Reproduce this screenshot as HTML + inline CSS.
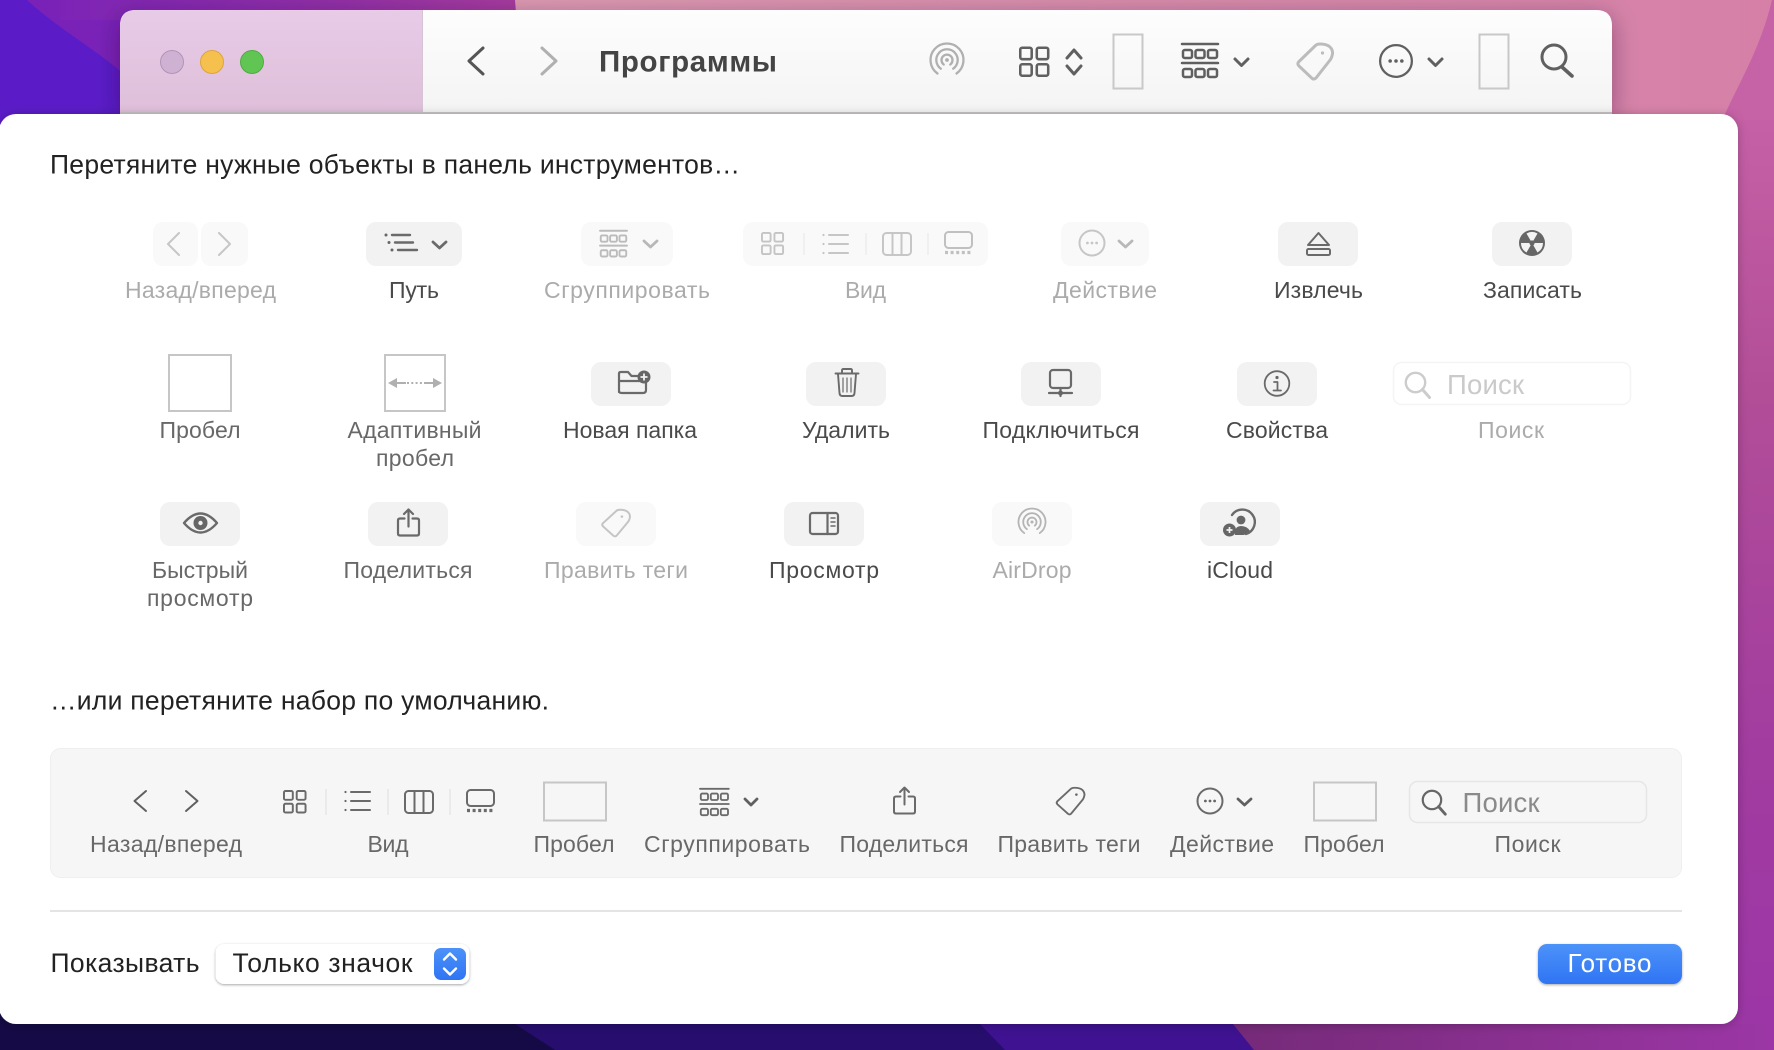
<!DOCTYPE html>
<html lang="ru"><head><meta charset="utf-8"><title>Панель инструментов</title>
<style>
html,body{margin:0;padding:0;background:#fff;width:1774px;height:1050px;overflow:hidden}
svg{display:block}
text{font-family:"Liberation Sans","DejaVu Sans",sans-serif;font-size:23px;text-anchor:middle}
.d{fill:#4a4a4a}.g{fill:#ababab}.m{fill:#686868}
.h{fill:#222;font-size:26.5px;text-anchor:start}
.s{fill:none;stroke:#6a6a6a;stroke-width:2;stroke-linecap:round;stroke-linejoin:round}
.f{fill:none;stroke:#c6c6c6;stroke-width:2;stroke-linecap:round;stroke-linejoin:round}
.t{fill:none;stroke:#606060;stroke-width:3;stroke-linecap:round;stroke-linejoin:round}
.n{fill:none;stroke:#6a6a6a;stroke-width:1.8;stroke-linecap:round;stroke-linejoin:round}
</style></head><body>
<svg xmlns="http://www.w3.org/2000/svg" width="1774" height="1050" viewBox="0 0 1774 1050">
<defs>
<linearGradient id="wr" x1="0" y1="0" x2="0" y2="1"><stop offset="0" stop-color="#c660a6"/><stop offset=".3" stop-color="#b24e98"/><stop offset=".7" stop-color="#a23ca0"/><stop offset="1" stop-color="#9c36a6"/></linearGradient>
<linearGradient id="side" x1="0" y1="0" x2="0" y2="1"><stop offset="0" stop-color="#e7cbe7"/><stop offset="1" stop-color="#dfbfda"/></linearGradient>
<linearGradient id="tb" x1="0" y1="0" x2="0" y2="1"><stop offset="0" stop-color="#fdfdfd"/><stop offset="1" stop-color="#f4f4f4"/></linearGradient>
<linearGradient id="btn" x1="0" y1="0" x2="0" y2="1"><stop offset="0" stop-color="#4c92f9"/><stop offset="1" stop-color="#2f74f3"/></linearGradient>
<linearGradient id="bot" x1="0" y1="0" x2="1" y2="0"><stop offset="0" stop-color="#752a78"/><stop offset="1" stop-color="#9c36a6"/></linearGradient>
<linearGradient id="top" x1="0" y1="0" x2="1" y2="0"><stop offset="0" stop-color="#7d24b6"/><stop offset=".6" stop-color="#9330a8"/><stop offset="1" stop-color="#a83c9e"/></linearGradient>
<linearGradient id="topp" x1="0" y1="0" x2="1" y2="0"><stop offset="0" stop-color="#de9ab2"/><stop offset=".5" stop-color="#d88cac"/><stop offset="1" stop-color="#d680a8"/></linearGradient>
<filter id="ss" x="-5%" y="-5%" width="110%" height="110%"><feDropShadow dx="0" dy="1" stdDeviation="5" flood-color="#000" flood-opacity=".25"/></filter>
<filter id="ws" x="-5%" y="-30%" width="110%" height="180%"><feDropShadow dx="0" dy="6" stdDeviation="12" flood-color="#200030" flood-opacity=".4"/></filter>
<filter id="sel" x="-10%" y="-20%" width="120%" height="150%"><feDropShadow dx="0" dy="1" stdDeviation="1.2" flood-color="#000" flood-opacity=".35"/></filter>

<g id="tag"><path d="M18.5 2.5Q20 1 23 1Q30 1 33 4Q36 7 35.500 11Q35 14 33.500 16.500L19 35Q17 37 15 35.300L2 23Q0 21 1.500 19Z"/><circle cx="25.500" cy="10" r="1.600" stroke="none" fill="currentColor"/></g>
<g id="air"><path d="M-9.500 13.500A16.500 16.500 0 1 1 9.500 13.500"/><path d="M-6.200 8.700A10.700 10.700 0 1 1 6.200 8.700"/><path d="M-3.300 4.500A5.500 5.500 0 1 1 3.300 4.500"/><circle r="1.900" fill="currentColor" stroke="none"/></g>
<g id="grp"><path d="M0 1H36M0 20H36"/><rect x="1" y="7" width="9" height="8" rx="1.800"/><rect x="13.500" y="7" width="9" height="8" rx="1.800"/><rect x="26" y="7" width="9" height="8" rx="1.800"/><rect x="1" y="26" width="9" height="8" rx="1.800"/><rect x="13.500" y="26" width="9" height="8" rx="1.800"/><rect x="26" y="26" width="9" height="8" rx="1.800"/></g>
<g id="grid"><rect x="1" y="1" width="9" height="9" rx="1.500"/><rect x="14" y="1" width="9" height="9" rx="1.500"/><rect x="1" y="14" width="9" height="9" rx="1.500"/><rect x="14" y="14" width="9" height="9" rx="1.500"/></g>
<g id="lst"><path d="M7 2H26M7 11H26M7 20H26"/><circle cx="1.500" cy="2" r="1.100" fill="currentColor" stroke="none"/><circle cx="1.500" cy="11" r="1.100" fill="currentColor" stroke="none"/><circle cx="1.500" cy="20" r="1.100" fill="currentColor" stroke="none"/></g>
<g id="col"><rect x="1" y="1" width="28" height="22" rx="3.500"/><path d="M10.500 1V23M19.500 1V23"/></g>
<g id="gal"><rect x="1" y="1" width="27" height="16" rx="3.500"/><path d="M1 21.500H28" stroke-dasharray="3 2.600" stroke-width="3.200" stroke-linecap="butt"/></g>
<g id="act"><circle r="12.500"/><circle cx="-4.600" r="1.400" fill="currentColor" stroke="none"/><circle r="1.400" fill="currentColor" stroke="none"/><circle cx="4.600" r="1.400" fill="currentColor" stroke="none"/></g>
<g id="lens"><circle cx="10.500" cy="10.500" r="9.700"/><path d="M17.500 17.500L24.500 25.500" stroke-width="3"/></g>
<g id="share"><path d="M7.500 10H3Q1 10 1 12V25Q1 27 3 27H20Q22 27 22 25V12Q22 10 20 10H15.500"/><path d="M11.500 18V1M7 5.500L11.500 1L16 5.500"/></g>
</defs>

<!-- wallpaper -->
<rect width="1774" height="1050" fill="#5b1cc8"/>
<path d="M27 0C60 30 90 45 125 75V0Z" fill="#7a22b8"/>
<path d="M60 0H515L526 20H60Z" fill="url(#top)"/>
<path d="M515 0H1774V140H526Z" fill="url(#topp)"/>
<path d="M1772 0C1760 50 1740 80 1720 125H1774V0Z" fill="#c662a6"/>
<rect x="0" y="1000" width="1690" height="50" fill="#150a45"/>
<path d="M515 1024H1000L1010 1050H555Z" fill="#260d6e"/>
<path d="M980 1024H1235L1255 1050H1005Z" fill="#3e1290"/>
<path d="M1233 1024H1774V1050H1254Z" fill="url(#bot)"/>
<rect x="1690" y="120" width="84" height="904" fill="url(#wr)"/>

<!-- finder window -->
<path d="M136 10H1596Q1612 10 1612 26V114H120V26Q120 10 136 10Z" fill="url(#tb)" filter="url(#ws)"/>
<path d="M136 10H422V114H120V26Q120 10 136 10Z" fill="url(#side)"/>
<rect x="422" y="10" width="1" height="104" fill="#d6c4d4"/>
<rect x="120" y="112" width="1492" height="2" fill="#c8c4c8"/>
<circle cx="172" cy="62" r="11.500" fill="#cfb1d3" stroke="#b293b8"/>
<circle cx="212" cy="62" r="11.500" fill="#f6c04f" stroke="#dca53b"/>
<circle cx="252" cy="62" r="11.500" fill="#61c554" stroke="#4fab42"/>
<path d="M483 48L469 61L483 74" fill="none" stroke="#555" stroke-width="3" stroke-linecap="round" stroke-linejoin="round"/>
<path d="M542 48L556 61L542 74" fill="none" stroke="#b0b0b0" stroke-width="3" stroke-linecap="round" stroke-linejoin="round"/>
<text x="599" y="71.500" style="text-anchor:start;font-size:29.500px;font-weight:bold;fill:#444" textLength="178">Программы</text>
<use href="#air" x="947" y="60" class="f" style="stroke:#b0b0b0;color:#b0b0b0;stroke-width:2.300"/>
<use href="#grid" transform="translate(1019 46.500) scale(1.270)" class="t" style="stroke-width:2"/>
<path d="M1067 58L1074 50L1081 58M1067 66L1074 74L1081 66" class="t"/>
<rect x="1113.500" y="34.500" width="29" height="54" fill="none" stroke="#c8c8c8" stroke-width="2"/>
<use href="#grp" x="1182" y="43" class="t" style="color:#606060;stroke-width:2.500"/>
<path d="M1235 59L1241.500 65.500L1248 59" class="t"/>
<use href="#tag" x="1297" y="43" class="f" style="stroke:#bcbcbc;color:#bcbcbc;stroke-width:3"/>
<use href="#act" transform="translate(1396 61) scale(1.270)" class="n" style="color:#606060;stroke:#606060"/>
<path d="M1429 59L1435.500 65.500L1442 59" class="t"/>
<rect x="1479.500" y="34.500" width="29" height="54" fill="none" stroke="#c8c8c8" stroke-width="2"/>
<circle cx="1554" cy="57" r="12" class="t"/><path d="M1562 67L1572 76" class="t" style="stroke-width:3.600"/>

<!-- sheet -->
<rect x="-1" y="114" width="1739" height="910" rx="17" fill="#fff" filter="url(#ss)"/>
<text class="h" x="50" y="173.500" textLength="690">Перетяните нужные объекты в панель инструментов…</text>

<!-- row 1 -->
<g fill="#f9f9f9">
<rect x="153" y="222" width="45" height="44" rx="10"/><rect x="201" y="222" width="47" height="44" rx="10"/>
<rect x="581" y="222" width="92" height="44" rx="10"/><rect x="743" y="222" width="245" height="44" rx="10"/>
<rect x="1061" y="222" width="88" height="44" rx="10"/>
</g>
<g fill="#f2f2f2">
<rect x="366" y="222" width="96" height="44" rx="10"/><rect x="1278" y="222" width="80" height="44" rx="10"/><rect x="1492" y="222" width="80" height="44" rx="10"/>
</g>
<path d="M179 233L168 244L179 255" class="f"/><path d="M219 233L230 244L219 255" class="f"/>
<g class="s" style="stroke-width:2.400"><path d="M392 235H410M395 242.500H413M398 250H417"/><path d="M433 242L439.500 248L446 242" style="stroke-width:2.800"/></g>
<circle cx="386" cy="235" r="1.500" fill="#666"/><circle cx="389" cy="242.500" r="1.500" fill="#666"/><circle cx="392" cy="250" r="1.500" fill="#666"/>
<use href="#grp" transform="translate(600 230) scale(.75 .78)" class="f" style="stroke:#bbb;stroke-width:2.500"/>
<path d="M644 241L650.500 247L657 241" class="f" style="stroke:#b8b8b8;stroke-width:2.800"/>
<use href="#grid" transform="translate(761 232) scale(.96)" class="f" style="stroke:#c4c4c4"/>
<path d="M804 233V255M866 233V255M928 233V255" stroke="#eee" stroke-width="1.500"/>
<use href="#lst" x="822" y="233" class="f" style="color:#c4c4c4"/>
<use href="#col" x="882" y="232" class="f"/>
<use href="#gal" x="944" y="231" class="f" style="stroke:#c0c0c0"/>
<use href="#act" x="1092" y="243" class="f" style="color:#c6c6c6"/>
<path d="M1119 241L1125.500 247L1132 241" class="f" style="stroke:#b8b8b8;stroke-width:2.800"/>
<path d="M1318.500 233L1329 245H1308Z" class="n" style="stroke-width:2"/><rect x="1307" y="249" width="23" height="6" rx="1.500" class="n" style="stroke-width:2"/>
<circle cx="1532" cy="243" r="13" fill="#666"/>
<path d="M1532 243L1526.500 233.500A11 11 0 0 1 1537.500 233.500ZM1532 243H1543A11 11 0 0 1 1537.500 252.500ZM1532 243L1526.500 252.500A11 11 0 0 1 1521 243Z" fill="#f2f2f2"/>
<circle cx="1532" cy="243" r="2.600" fill="#666"/>
<text class="g" x="200.500" y="298" textLength="151">Назад/вперед</text>
<text class="d" x="414" y="298" textLength="50">Путь</text>
<text class="g" x="627" y="298" textLength="166">Сгруппировать</text>
<text class="g" x="865.500" y="298" textLength="41">Вид</text>
<text class="g" x="1105" y="298" textLength="104">Действие</text>
<text class="d" x="1318.500" y="298" textLength="89">Извлечь</text>
<text class="d" x="1532.500" y="298" textLength="99">Записать</text>

<!-- row 2 -->
<rect x="169" y="355" width="62" height="56" fill="#fff" stroke="#c6c6c6" stroke-width="2"/>
<rect x="385" y="355" width="60" height="56" fill="#fff" stroke="#c6c6c6" stroke-width="2"/>
<path d="M397 378V388L388 383ZM433 378V388L442 383Z" fill="#b0b0b0"/><path d="M397 383H406M433 383H424" stroke="#b0b0b0" stroke-width="2"/><path d="M407 383H424" stroke="#b0b0b0" stroke-width="2" stroke-dasharray="2 2.300"/>
<g fill="#f2f2f2">
<rect x="591" y="362" width="80" height="44" rx="10"/><rect x="806" y="362" width="80" height="44" rx="10"/><rect x="1021" y="362" width="80" height="44" rx="10"/><rect x="1237" y="362" width="80" height="44" rx="10"/>
</g>
<path d="M619 392V373.500Q619 372 621 372H628L631.500 376H640M619 381H640M646 383V390Q646 393 643 393H622Q619 393 619 391" class="n" style="stroke-width:2.200"/>
<circle cx="644" cy="377" r="6.500" fill="#666"/><path d="M640.500 377H647.500M644 373.500V380.500" stroke="#f2f2f2" stroke-width="1.800"/>
<g class="n" style="stroke-width:1.900"><path d="M835.500 373.500H858.500M842 373V370.500Q842 369 843.500 369H850.500Q852 369 852 370.500V373"/><path d="M838 374L839.500 393Q839.700 396 842.500 396H851.500Q854.300 396 854.500 393L856 374"/><path d="M843 378V392M847 378V392M851 378V392" stroke-width="1.200"/></g>
<g class="n" style="stroke-width:2.200"><rect x="1050" y="370" width="21" height="18" rx="3"/><path d="M1060.500 388V396M1049 393H1072"/></g><circle cx="1060.500" cy="393" r="2.500" fill="#666"/>
<circle cx="1277" cy="383.500" r="12.300" class="n"/><circle cx="1277" cy="377.500" r="1.600" fill="#666"/><path d="M1274 382H1277.500V390M1273.500 390.500H1281" class="n" style="stroke-width:1.800"/>
<rect x="1393.500" y="362.500" width="237" height="42" rx="8" fill="#fff" stroke="#f4f4f4" stroke-width="1.500"/>
<use href="#lens" x="1405" y="372" style="fill:none;stroke:#ccc;stroke-width:2.400;stroke-linecap:round"/>
<text x="1447" y="394" style="text-anchor:start;font-size:27.500px;fill:#cacaca" textLength="77">Поиск</text>
<text class="m" x="200" y="438" textLength="81">Пробел</text>
<text class="m" x="414.500" y="438" textLength="134">Адаптивный</text>
<text class="m" x="415" y="466" textLength="78">пробел</text>
<text class="d" x="630" y="438" textLength="134">Новая папка</text>
<text class="d" x="846" y="438" textLength="88">Удалить</text>
<text class="d" x="1061" y="438" textLength="157">Подключиться</text>
<text class="d" x="1277" y="438" textLength="102">Свойства</text>
<text class="g" x="1511" y="438" textLength="66">Поиск</text>

<!-- row 3 -->
<g fill="#f2f2f2">
<rect x="160" y="502" width="80" height="44" rx="10"/><rect x="368" y="502" width="80" height="44" rx="10"/><rect x="784" y="502" width="80" height="44" rx="10"/><rect x="1200" y="502" width="80" height="44" rx="10"/>
</g>
<g fill="#f9f9f9"><rect x="576" y="502" width="80" height="44" rx="10"/><rect x="992" y="502" width="80" height="44" rx="10"/></g>
<path d="M184 523Q200.500 504 217 523Q200.500 542 184 523Z" class="n" style="stroke-width:2.400"/><circle cx="200.500" cy="523" r="7" fill="#666"/><circle cx="200.500" cy="523" r="2.200" fill="#f2f2f2"/>
<use href="#share" x="397" y="508.500" class="n" style="stroke-width:2.200"/>
<use href="#tag" transform="translate(601.500 509) scale(.8 .76)" class="f" style="stroke:#c4c4c4;color:#c4c4c4;stroke-width:2.500"/>
<g class="n" style="stroke-width:2.200"><rect x="810" y="513" width="28" height="21" rx="2.500"/><path d="M827.500 513V534"/><path d="M831 518H835M831 522H835M831 526H835" style="stroke-width:1.500"/></g>
<use href="#air" transform="translate(1032 522) scale(.82)" class="f" style="stroke:#b4b4b4;color:#b4b4b4;stroke-width:2.200"/>
<path d="M1232 515A12.500 12.500 0 1 1 1246 534" class="n" style="stroke-width:2.400"/>
<circle cx="1241" cy="520" r="4.400" fill="#666"/><path d="M1235 535V531Q1236 526 1241 526Q1247 526 1250 531L1244 535Z" fill="#666"/>
<circle cx="1229.500" cy="530" r="6.500" fill="#666"/><path d="M1226.500 530H1232.500M1229.500 527V533" stroke="#f2f2f2" stroke-width="1.700"/>
<text class="m" x="200" y="578" textLength="96">Быстрый</text>
<text class="m" x="200" y="606" textLength="106">просмотр</text>
<text class="m" x="408" y="578" textLength="129">Поделиться</text>
<text class="g" x="616" y="578" textLength="144">Править теги</text>
<text class="d" x="824" y="578" textLength="110">Просмотр</text>
<text class="g" x="1032" y="578" textLength="79">AirDrop</text>
<text class="d" x="1240" y="578" textLength="66">iCloud</text>

<text class="h" x="50" y="709.500" textLength="499">…или перетяните набор по умолчанию.</text>

<!-- default set -->
<rect x="50.500" y="748.500" width="1631" height="129" rx="10" fill="#f6f6f6" stroke="#efefef"/>
<g class="n" style="stroke:#606060;stroke-width:2"><path d="M146 791L134.500 801L146 811M186 791L197.500 801L186 811"/></g>
<use href="#grid" transform="translate(283 790) scale(.98)" class="n" style="stroke-width:2"/>
<path d="M326 789V815M388 789V815M450 789V815" stroke="#e6e6e6" stroke-width="1.500"/>
<use href="#lst" x="344" y="790" class="n" style="color:#666;stroke-width:2"/>
<use href="#col" x="404" y="790" class="n" style="stroke-width:2"/>
<use href="#gal" x="466" y="789" class="n" style="color:#666;stroke-width:2"/>
<rect x="544" y="782.500" width="62" height="38" fill="none" stroke="#c6c6c6" stroke-width="2"/>
<use href="#grp" transform="translate(700 788) scale(.8)" class="n" style="stroke-width:2.300"/>
<path d="M745 799L751 805L757 799" class="t" style="stroke-width:2.800"/>
<use href="#share" x="893" y="786.500" class="n" style="stroke-width:2"/>
<use href="#tag" transform="translate(1056 787) scale(.8 .76)" class="n" style="color:#666;stroke-width:2.400"/>
<use href="#act" x="1210" y="801" class="n" style="color:#666;stroke-width:2"/>
<path d="M1238 799L1244.500 805L1251 799" class="t" style="stroke-width:2.800"/>
<rect x="1314" y="782.500" width="62" height="38" fill="none" stroke="#c6c6c6" stroke-width="2"/>
<rect x="1409.500" y="781.500" width="237" height="41" rx="8" fill="#f6f6f6" stroke="#e6e6e6" stroke-width="1.500"/>
<use href="#lens" transform="translate(1422 790) scale(.95)" style="fill:none;stroke:#666;stroke-width:2.300;stroke-linecap:round"/>
<text x="1462.500" y="812" style="text-anchor:start;font-size:27.500px;fill:#8a8a8a" textLength="77">Поиск</text>
<g class="m">
<text x="166" y="852" textLength="152">Назад/вперед</text>
<text x="388" y="852" textLength="41">Вид</text>
<text x="574" y="852" textLength="81">Пробел</text>
<text x="727" y="852" textLength="166">Сгруппировать</text>
<text x="904" y="852" textLength="129">Поделиться</text>
<text x="1069" y="852" textLength="143">Править теги</text>
<text x="1222" y="852" textLength="104">Действие</text>
<text x="1344" y="852" textLength="81">Пробел</text>
<text x="1527.500" y="852" textLength="66">Поиск</text>
</g>
<rect x="50" y="910" width="1632" height="2" fill="#e4e4e4"/>

<!-- footer -->
<text class="h" x="50.500" y="972" textLength="149">Показывать</text>
<rect x="215.500" y="944" width="254" height="40" rx="9" fill="#fff" filter="url(#sel)"/>
<text class="h" x="232.500" y="972" textLength="180">Только значок</text>
<rect x="434" y="948" width="32" height="32" rx="7" fill="url(#btn)"/>
<path d="M444 959.500L450 953.500L456 959.500M444 968.500L450 974.500L456 968.500" fill="none" stroke="#fff" stroke-width="2.400" stroke-linecap="round" stroke-linejoin="round"/>
<rect x="1538" y="944" width="144" height="40" rx="9" fill="url(#btn)" filter="url(#sel)"/>
<text x="1609.500" y="972" style="font-size:26px;fill:#fff" textLength="84">Готово</text>
</svg>
</body></html>
